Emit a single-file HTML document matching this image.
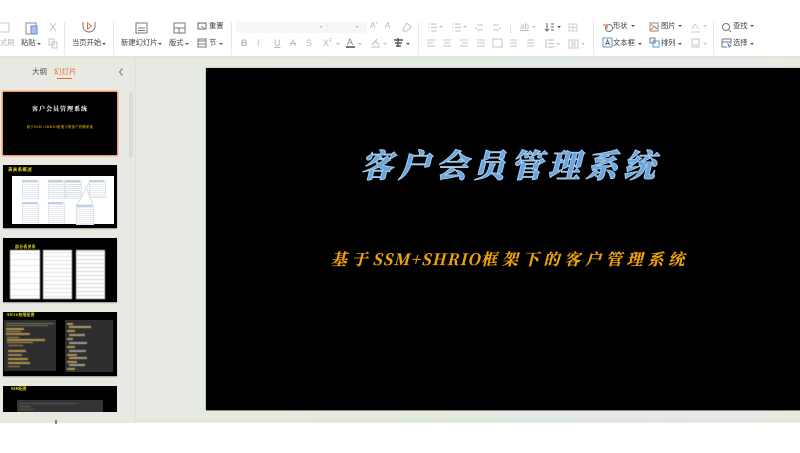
<!DOCTYPE html>
<html lang="zh"><head><meta charset="utf-8">
<style>
html,body{margin:0;padding:0;width:800px;height:453px;overflow:hidden;background:#fff;font-family:"Liberation Sans","Noto Sans CJK SC",sans-serif}
.a{position:absolute}
#rb{position:absolute;left:0;top:0;width:800px;height:56px;background:#fff;overflow:hidden;filter:blur(.35px)}
.t{position:absolute;font-size:7.3px;line-height:10px;color:#3e3e3e;white-space:nowrap}
.g{color:#b5b5b5}
.sep{position:absolute;top:22px;width:1px;height:33px;background:#e8e8e8}
svg{position:absolute;overflow:visible}
svg *{fill:none;stroke-width:1}
.ar{position:absolute;width:0;height:0;border-left:2px solid transparent;border-right:2px solid transparent;border-top:2px solid #555}
.ag{border-top-color:#c4c4c4}
.th{position:absolute;left:3px;width:114px;background:#000;box-shadow:0 1px 1px #9a9e98;overflow:hidden}
.l{position:absolute;height:1px;filter:blur(.4px)}
.col{position:absolute;top:12px;height:49px;filter:blur(.5px)}
</style></head><body>
<div class="a" style="left:0;top:57px;width:800px;height:366px;background:linear-gradient(90deg,#e8e9e2 0%,#e6ebe2 30%,#e2e9e0 60%,#e4e9e8 78%,#e8eae2 100%)"></div>
<div class="a" style="left:0;top:56px;width:800px;height:2px;background:#e2e4e0"></div>
<div class="a" style="left:135px;top:58px;width:1px;height:365px;background:#dfe2da"></div>
<div class="a" style="left:136px;top:420px;width:664px;height:1px;background:#dcdfd8"></div>
<div class="a" style="left:0;top:423px;width:800px;height:30px;background:#fff"></div>
<div class="a" style="left:55px;top:420px;width:2px;height:4px;background:#888"></div>

<div id="rb">
<svg style="left:0;top:22px" width="12" height="12"><path d="M-1 1H9V10H-1" stroke="#c8c8c8"/></svg>
<div class="t g" style="left:0;top:38px">式刷</div>
<svg style="left:25px;top:22px" width="14" height="13"><path d="M1 1H11V12H1Z" stroke="#8a8a8a"/><rect x="6" y="4" width="6" height="8" stroke="#5d8fd0" style="fill:#a8c4e8"/></svg>
<div class="t" style="left:21px;top:38px">粘贴</div><div class="ar" style="left:37px;top:43px"></div>
<svg style="left:48px;top:22px" width="10" height="10"><path d="M2 1L8 9M8 1L2 9" stroke="#c4c4c4"/></svg>
<svg style="left:48px;top:38px" width="10" height="10"><path d="M1 1H6V7H1ZM4 4H9V10H4Z" stroke="#c4c4c4"/></svg>
<div class="sep" style="left:64px"></div>
<svg style="left:82px;top:20px" width="14" height="13"><path d="M1 2V6A6 6 0 0 0 13 6V2" stroke="#777"/><path d="M5.500 3L9.500 6L5.500 9Z" stroke="#e8693a"/></svg>
<div class="t" style="left:72px;top:38px">当页开始</div><div class="ar" style="left:102px;top:43px"></div>
<div class="sep" style="left:113px"></div>
<svg style="left:135px;top:22px" width="14" height="12"><path d="M1 1H12V11H1ZM3 6H10M3 8.500H10" stroke="#777"/></svg>
<div class="t" style="left:121px;top:38px">新建幻灯片</div><div class="ar" style="left:158px;top:43px"></div>
<svg style="left:173px;top:22px" width="14" height="12"><path d="M1 1H12V11H1ZM1 6H12M6 6V11" stroke="#777"/></svg>
<div class="t" style="left:169px;top:38px">版式</div><div class="ar" style="left:185px;top:43px"></div>
<svg style="left:197px;top:22px" width="10" height="9"><path d="M1 1H9V7H1Z" stroke="#666"/><path d="M4 4L7 6" stroke="#5d8fd0"/></svg>
<div class="t" style="left:209px;top:21px">重置</div>
<svg style="left:197px;top:38px" width="10" height="10"><path d="M1 1H9V9H1ZM1 3H9M1 6H9" stroke="#777"/></svg>
<div class="t" style="left:209px;top:38px">节</div><div class="ar" style="left:219px;top:43px"></div>
<div class="sep" style="left:231px"></div>

<div class="a" style="left:236px;top:22px;width:131px;height:11px;background:#f7f7f7;border-radius:2px"></div>
<div class="a" style="left:326px;top:22px;width:1px;height:11px;background:#eee"></div>
<div class="ar ag" style="left:319px;top:26px"></div><div class="ar ag" style="left:355px;top:26px"></div>
<div class="t g" style="left:370px;top:21px;font-size:8px">A<sup style="font-size:5px;line-height:0">+</sup></div>
<div class="t g" style="left:385px;top:21px;font-size:8px">A</div>
<svg style="left:401px;top:22px" width="11" height="10"><path d="M2 7L6 1L10 5L6 9H2Z" stroke="#c4c4c4"/></svg>
<div class="t g" style="left:241px;top:38px;font-weight:bold;font-size:9px">B</div>
<div class="t g" style="left:257px;top:38px;font-style:italic;font-size:9px">I</div>
<div class="t g" style="left:274px;top:38px;text-decoration:underline;font-size:9px">U</div>
<div class="t g" style="left:290px;top:38px;text-decoration:line-through;font-size:9px">A</div>
<div class="t g" style="left:306px;top:38px;font-size:9px">S</div>
<div class="t g" style="left:323px;top:38px;font-size:9px">X<sup style="font-size:5px;line-height:0">2</sup></div><div class="ar ag" style="left:336px;top:43px"></div>
<div class="t" style="left:347px;top:37px;font-size:9px;color:#888">A</div><div class="a" style="left:346px;top:46px;width:9px;height:2px;background:#777"></div><div class="ar ag" style="left:358px;top:43px"></div>
<svg style="left:370px;top:38px" width="11" height="10"><path d="M2 7L7 1M1 9H10M5 3L9 7" stroke="#bdbdbd"/></svg><div class="ar ag" style="left:383px;top:43px"></div>
<svg style="left:393px;top:37px" width="11" height="11"><path d="M1 3H10M5 1V10M2 6H9M3 9H8" stroke="#555" style="stroke-width:1.400"/></svg><div class="ar" style="left:406px;top:43px"></div>
<div class="sep" style="left:418px"></div>

<svg style="left:428px;top:23px;" width="100" height="10"><path d="M0 1H1M3 1H9M0 4.500H1M3 4.500H9M0 8H1M3 8H9M24 1H25M27 1H33M24 4.500H25M27 4.500H33M24 8H25M27 8H33M49 2H55M47 4.500L49 6M49 7H55M65 2H71M65 7H71M73 4.500L71 6" stroke="#c4c4c4"/></svg>
<div class="ar ag" style="left:439px;top:26px"></div><div class="ar ag" style="left:463px;top:26px"></div>
<div class="a" style="left:510px;top:25px;width:1px;height:8px;background:#ddd"></div>
<div class="t g" style="left:520px;top:22px;text-decoration:underline;font-size:8px">ab</div><div class="ar ag" style="left:532px;top:26px"></div>
<svg style="left:427px;top:39px" width="115" height="10"><path d="M0 1H8M0 4H6M0 7H8M16 1H24M17 4H23M16 7H24M33 1H41M35 4H41M33 7H41M50 1H58M50 4H58M50 7H58M66 0H75V8H66ZM83 1H90M83 4H90M83 7H90M100 1H107M100 4H107M100 7H107" stroke="#c4c4c4"/></svg>
<svg style="left:544px;top:23px" width="11" height="10"><path d="M3 0V8M1 6L3 8L5 6M7 1H10M7 4H10M7 7H10" stroke="#666"/></svg><div class="ar" style="left:557px;top:26px"></div>
<svg style="left:568px;top:23px" width="10" height="10"><path d="M1 1H9V8H1ZM5 1V8M1 4.500H9" stroke="#cfcfcf"/></svg>
<svg style="left:544px;top:39px" width="10" height="10"><path d="M2 0V9M4 1H10M4 4.500H10M4 8H10" stroke="#bdbdbd"/></svg><div class="ar ag" style="left:556px;top:43px"></div>
<svg style="left:568px;top:39px" width="11" height="10"><path d="M1 1H10V9H1ZM3 3H8M3 5H8M3 7H8" stroke="#c8c8c8"/></svg><div class="ar ag" style="left:581px;top:43px"></div>
<div class="sep" style="left:593px"></div>

<svg style="left:602px;top:22px" width="11" height="11"><circle cx="7" cy="6" r="3.500" stroke="#777"/><path d="M1 3H5V7" stroke="#e8693a"/></svg>
<div class="t" style="left:613px;top:21px">形状</div><div class="ar" style="left:631px;top:25px"></div>
<svg style="left:649px;top:22px" width="10" height="10"><path d="M1 1H9V9H1Z" stroke="#888"/><path d="M2 8L5 4L8 7M2 3H4" stroke="#e8693a"/></svg>
<div class="t" style="left:661px;top:21px">图片</div><div class="ar" style="left:678px;top:25px"></div>
<svg style="left:690px;top:23px" width="12" height="10"><path d="M2 6L5 1L9 6M1 9H10" stroke="#cfcfcf"/></svg><div class="ar ag" style="left:703px;top:25px"></div>
<svg style="left:602px;top:37px" width="11" height="11"><path d="M1 1H10V10H1Z" stroke="#6a8fc0"/><path d="M3.500 8L5.500 3L7.500 8M4 6.500H7" stroke="#666"/></svg>
<div class="t" style="left:613px;top:38px">文本框</div><div class="ar" style="left:638px;top:43px"></div>
<svg style="left:649px;top:37px" width="11" height="11"><path d="M1 1H6V6H1Z" stroke="#777"/><path d="M4 4H10V10H4Z" stroke="#5d8fd0"/></svg>
<div class="t" style="left:661px;top:38px">排列</div><div class="ar" style="left:678px;top:43px"></div>
<svg style="left:690px;top:38px" width="11" height="10"><path d="M2 1H9V7H2ZM1 9H10" stroke="#c4c4c4"/></svg><div class="ar ag" style="left:703px;top:43px"></div>
<div class="sep" style="left:713px"></div>
<svg style="left:721px;top:22px" width="11" height="11"><circle cx="5" cy="5" r="3.500" stroke="#777"/><path d="M8 8L10 10" stroke="#777"/></svg>
<div class="t" style="left:733px;top:21px">查找</div><div class="ar" style="left:750px;top:25px"></div>
<svg style="left:721px;top:38px" width="11" height="10"><path d="M1 1H10V6M1 1V9H6M1 4H10" stroke="#777"/><path d="M7 6L10 8L8 9Z" stroke="#5d8fd0"/></svg>
<div class="t" style="left:733px;top:38px">选择</div><div class="ar" style="left:750px;top:43px"></div>
<div class="a" style="left:0;top:0;width:800px;height:22px;background:#fff"></div>
</div>

<div class="t" style="left:32px;top:67px;color:#555;font-size:7.5px;filter:blur(.3px)">大纲</div>
<div class="t" style="left:54px;top:67px;color:#d8743c;font-size:7.5px;filter:blur(.3px)">幻灯片</div>
<div class="a" style="left:57px;top:78px;width:15px;height:1px;background:#d8743c"></div>
<svg style="left:118px;top:68px" width="6" height="8"><path d="M4.500 .5L1.500 4L4.500 7.500" stroke="#777"/></svg>
<div class="a" style="left:129px;top:92px;width:4px;height:66px;background:#d8dcd4;border-radius:2px"></div>

<!-- thumb 1 -->
<div class="th" style="top:92px;height:63px;box-shadow:0 0 0 1px #e89a70,0 0 0 2px #f0c8ae;border-radius:1px">
<div class="a" style="left:0;top:12px;width:114px;text-align:center;font:900 6px/10px 'Noto Serif CJK SC',serif;letter-spacing:1px;color:#eef4fb;filter:blur(.25px)">客户会员管理系统</div>
<div class="a" style="left:0;top:32px;width:114px;text-align:center;font:bold 3.200px/6px 'Noto Serif CJK SC',serif;letter-spacing:.4px;color:#e8a810;filter:blur(.2px)">基于SSM+SHRIO框架下的客户管理系统</div>
</div>
<!-- thumb 2 -->
<div class="th" style="top:165px;height:63px">
<div class="a" style="left:5px;top:1px;font:bold 4.500px/8px 'Noto Sans CJK SC',sans-serif;color:#e8e020;letter-spacing:.3px">表关系概述</div>
<div class="a" style="left:9px;top:11px;width:102px;height:48px;background:#fff"></div>
<div class="a" style="left:19px;top:15px;width:15px;height:17px;border:1px solid #dce6f3;background:repeating-linear-gradient(#fff 0 1px,#e8eaee 1px 2px)"></div>
<div class="a" style="left:45px;top:15px;width:15px;height:17px;border:1px solid #dce6f3;background:repeating-linear-gradient(#fff 0 1px,#e0e2e6 1px 2px)"></div>
<div class="a" style="left:62px;top:15px;width:15px;height:17px;border:1px solid #dce6f3;background:repeating-linear-gradient(#fff 0 1px,#dcdee2 1px 2px)"></div>
<div class="a" style="left:86px;top:15px;width:15px;height:16px;border:1px solid #dce6f3;background:repeating-linear-gradient(#fff 0 1px,#e8eaee 1px 2px)"></div>
<div class="a" style="left:19px;top:37px;width:15px;height:19px;border:1px solid #dce6f3;background:repeating-linear-gradient(#fff 0 1px,#e8eaee 1px 2px)"></div>
<div class="a" style="left:45px;top:37px;width:15px;height:19px;border:1px solid #dce6f3;background:repeating-linear-gradient(#fff 0 1px,#e8eaee 1px 2px)"></div>
<div class="a" style="left:73px;top:40px;width:16px;height:18px;border:1px solid #dce6f3;background:repeating-linear-gradient(#fff 0 1px,#e8eaee 1px 2px)"></div>
<svg style="left:72px;top:18px" width="20" height="24"><path d="M14 0L2 22H18L12 6" stroke="#d8dce2"/></svg>
<div class="a" style="left:19px;top:15px;width:15px;height:2px;background:#bcd2ec"></div>
<div class="a" style="left:45px;top:15px;width:15px;height:2px;background:#bcd2ec"></div>
<div class="a" style="left:62px;top:15px;width:15px;height:2px;background:#bcd2ec"></div>
<div class="a" style="left:86px;top:15px;width:15px;height:2px;background:#bcd2ec"></div>
<div class="a" style="left:19px;top:37px;width:15px;height:2px;background:#bcd2ec"></div>
<div class="a" style="left:45px;top:37px;width:15px;height:2px;background:#bcd2ec"></div>
<div class="a" style="left:73px;top:40px;width:16px;height:2px;background:#bcd2ec"></div>
</div>
<!-- thumb 3 -->
<div class="th" style="top:238px;height:64px">
<div class="a" style="left:12px;top:7px;font:bold 3.800px/6px 'Noto Sans CJK SC',sans-serif;color:#e8e020;letter-spacing:.4px">部分表关系</div>
<div class="col" style="left:7px;width:30px;background:repeating-linear-gradient(#fff 0 3px,#e4e4e4 3px 4px,#fff 4px 6px)"></div>
<div class="col" style="left:40px;width:29px;background:repeating-linear-gradient(#fff 0 2px,#dcdcdc 2px 3px,#fff 3px 4px)"></div>
<div class="col" style="left:73px;width:29px;background:repeating-linear-gradient(#fff 0 1px,#d4d4d4 1px 2px,#fff 2px 4px)"></div>
</div>
<!-- thumb 4 -->
<div class="th" style="top:312px;height:64px">
<div class="a" style="left:4px;top:1px;font:bold 3.800px/6px 'Noto Sans CJK SC',sans-serif;color:#e8e020;letter-spacing:.3px">Shiro权限配置</div>
<div class="a" style="left:1px;top:8px;width:52px;height:51px;background:#2e2e2e"></div>
<div class="a" style="left:62px;top:8px;width:48px;height:52px;background:#2e2e2e"></div>
<div class="l" style="left:3px;top:11px;width:48px;background:#7a7a60"></div>
<div class="l" style="left:3px;top:13px;width:42px;background:#6a8060"></div>
<div class="l" style="left:3px;top:16px;width:18px;background:#b89a50;height:2px"></div>
<div class="l" style="left:3px;top:19px;width:15px;background:#b89a50"></div>
<div class="l" style="left:3px;top:21px;width:24px;background:#b09050;height:2px"></div>
<div class="l" style="left:4px;top:25px;width:12px;background:#b89a50"></div>
<div class="l" style="left:4px;top:27px;width:38px;background:#b89a50;height:2px"></div>
<div class="l" style="left:4px;top:30px;width:26px;background:#b89a50"></div>
<div class="l" style="left:5px;top:33px;width:15px;background:#a89050"></div>
<div class="l" style="left:5px;top:38px;width:18px;background:#b89a50;height:2px"></div>
<div class="l" style="left:5px;top:42px;width:14px;background:#9a8a60;height:2px"></div>
<div class="l" style="left:5px;top:46px;width:20px;background:#b89a50;height:2px"></div>
<div class="l" style="left:5px;top:50px;width:22px;background:#b89a50;height:2px"></div>
<div class="l" style="left:5px;top:54px;width:12px;background:#a89050"></div>
<div class="l" style="left:64px;top:11px;width:6px;background:#b89a50;height:2px"></div>
<div class="l" style="left:66px;top:14px;width:22px;background:#b0a070;height:2px"></div>
<div class="l" style="left:64px;top:18px;width:8px;background:#b89a50;height:2px"></div>
<div class="l" style="left:66px;top:22px;width:16px;background:#b0a070;height:2px"></div>
<div class="l" style="left:64px;top:26px;width:6px;background:#b89a50;height:2px"></div>
<div class="l" style="left:66px;top:30px;width:18px;background:#9aa0a8;height:2px"></div>
<div class="l" style="left:64px;top:34px;width:8px;background:#b89a50;height:2px"></div>
<div class="l" style="left:66px;top:38px;width:17px;background:#9aa0a8;height:2px"></div>
<div class="l" style="left:64px;top:42px;width:10px;background:#b89a50;height:2px"></div>
<div class="l" style="left:66px;top:45px;width:18px;background:#b0a070;height:2px"></div>
<div class="l" style="left:64px;top:49px;width:10px;background:#b89a50;height:2px"></div>
<div class="l" style="left:66px;top:52px;width:16px;background:#9aa0a8;height:2px"></div>
<div class="l" style="left:64px;top:56px;width:8px;background:#b89a50;height:2px"></div>
</div>
<!-- thumb 5 -->
<div class="th" style="top:386px;height:26px;box-shadow:none">
<div class="a" style="left:8px;top:1px;font:bold 3.800px/6px 'Noto Sans CJK SC',sans-serif;color:#e8e020">SSM配置</div>
<div class="a" style="left:14px;top:14px;width:86px;height:12px;background:#333"></div>
<div class="l" style="left:16px;top:17px;width:60px;background:#555"></div>
<div class="l" style="left:16px;top:20px;width:12px;background:#666"></div>
<div class="l" style="left:16px;top:23px;width:16px;background:#6a5a40"></div>
</div>

<!-- main slide -->
<div class="a" style="left:206px;top:68px;width:594px;height:342px;background:#000;box-shadow:0 1px 0 #8a8a86,-1px 0 0 #c8cac4,0 -1px 0 #d0d2cc">
<div class="a" style="left:0;top:73px;width:609px;text-align:center;white-space:nowrap;font:italic 900 32px/46px 'Noto Serif CJK SC',serif;letter-spacing:5.500px;color:#6aa6de;-webkit-text-stroke:.9px #a9cdee;text-shadow:0 0 1px #2c5f8f">客户会员管理系统</div>
<div class="a" style="left:0;top:178px;width:608px;text-align:center;white-space:nowrap;font:italic bold 16px/26px 'Noto Serif CJK SC',serif;letter-spacing:4.800px;color:#efa40c;-webkit-text-stroke:.2px #efa40c">基于<span style="letter-spacing:1.400px;font-size:15.500px">SSM+SHRIO</span>框架下的客户管理系统</div>
</div>
</body></html>
